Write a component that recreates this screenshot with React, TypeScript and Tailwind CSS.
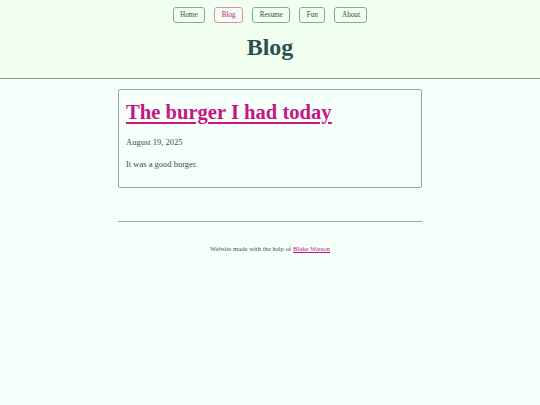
export default function App() {
  const navs = ["Home", "Blog", "Resume", "Fun", "About"];
  return (
    <div className="min-h-[405px] bg-[#f5fffa] text-[#2f4f4f]" style={{ fontFamily: '"Liberation Serif", serif' }}>
      <header className="bg-[#f0fff0] border-b border-[#999999] h-[79px] flex flex-col items-center">
        <nav className="flex gap-[9px] mt-[7px]">
          {navs.map((n) => (
            <a
              key={n}
              className={`h-[16px] px-[6.5px] flex items-center rounded-[3px] border text-[7.2px] ${
                n === "Blog" ? "border-[#d98cba] text-[#c71585]" : "border-[#8aa59c] text-[#2f4f4f]"
              }`}
            >
              {n}
            </a>
          ))}
        </nav>
        <h1 className="mt-[9px] text-[24px] font-bold leading-[30px]">Blog</h1>
      </header>
      <main className="w-[304px] mx-auto mt-[10px]">
        <article className="border border-[#9aa5a5] rounded-[2px] h-[99px] px-[7px] pt-[9px]">
          <h2 className="text-[20.6px] font-bold leading-[26px] text-[#c71585] underline underline-offset-[3px]">
            <a>The burger I had today</a>
          </h2>
          <p className="text-[8.5px] mt-[11px] leading-[12px]">August 19, 2025</p>
          <p className="text-[8.5px] mt-[10px] leading-[12px]">It was a good burger.</p>
        </article>
        <hr className="mt-[33px] border-t border-[#9aa5a5]" />
        <p className="text-center text-[6.7px] mt-[22px] text-[#555]">
          Website made with the help of <a className="text-[#c71585] underline">Blake Watson</a>
        </p>
      </main>
    </div>
  );
}
